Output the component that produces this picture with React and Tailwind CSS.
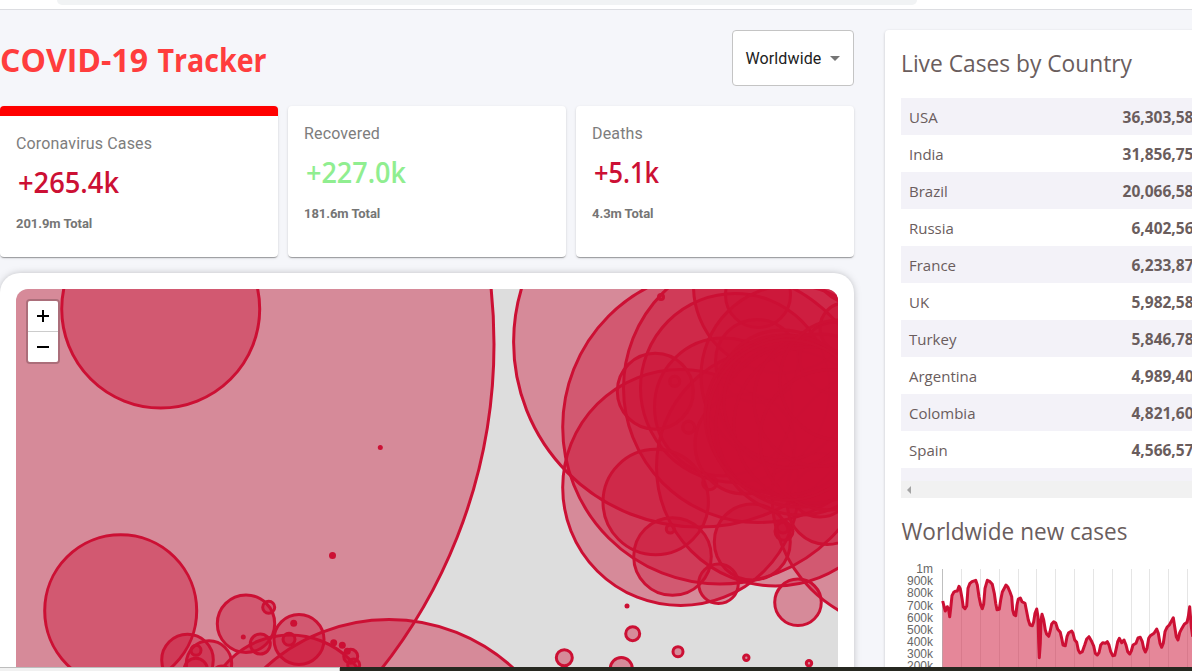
import React from "react";

const stats = [
  { title: "Coronavirus Cases", value: "+265.4k", total: "201.9m Total", color: "text-[#cc1034]", length: 101, active: true },
  { title: "Recovered", value: "+227.0k", total: "181.6m Total", color: "text-[#90ee90]", length: 100 },
  { title: "Deaths", value: "+5.1k", total: "4.3m Total", color: "text-[#cc1034]", length: 65 },
];

const countries = [
  ["USA", "36,303,58"],
  ["India", "31,856,75"],
  ["Brazil", "20,066,58"],
  ["Russia", "6,402,56"],
  ["France", "6,233,87"],
  ["UK", "5,982,58"],
  ["Turkey", "5,846,78"],
  ["Argentina", "4,989,40"],
  ["Colombia", "4,821,60"],
  ["Spain", "4,566,57"],
];

// Case circles on the map: [centre x, centre y, radius]
const circles = [
  [-31, 344, 525], [160.7, 309, 99], [120.7, 610.7, 76],
  [246, 623.7, 28.7], [268.7, 607.3, 6], [299, 639.5, 25], [293.7, 623.3, 2], [243.3, 637, 1],
  [260.3, 644, 10], [289, 639.3, 6], [333.7, 642.7, 2], [342.3, 645.3, 2], [350.7, 656.3, 7],
  [353.7, 665, 6], [347.3, 651.3, 2], [187.5, 660, 25.8], [209, 663.5, 22.7], [196, 650.3, 5],
  [195.8, 670, 11.7], [222, 676, 10], [290, 720.4, 85.4], [389, 802.8, 183.3],
  [380.3, 447.5, 1], [332.5, 555.5, 2],
  [698.6, 342, 185], [719.7, 427, 157], [680.7, 487.5, 118], [758, 388, 134.5], [735, 388, 94.5],
  [723.5, 407, 69], [775.5, 467, 119], [655.3, 391.3, 38], [674.7, 381.3, 5], [688.7, 427.3, 6],
  [661, 297, 2.5], [655.7, 502, 52.7], [672.5, 556.5, 38.8], [752.3, 542, 38], [718.5, 583.7, 19.8],
  [798, 602.3, 23.3], [627, 606, 1], [632.7, 633.7, 7], [564.3, 657.7, 8], [621.3, 668.5, 11],
  [678, 651.7, 5], [746.3, 657.7, 2.7], [809, 663.3, 2.7], [670.3, 529, 4], [709.7, 482.7, 7],
  [784, 531.3, 9], [783, 527, 6], [905, 495, 133], [827, 505, 39.5], [820, 485, 32],
  [745, 444, 50], [758, 295, 32.5], [780.5, 286, 87], [757, 361, 41.5], [792, 376, 91],
  [782, 395, 65], [836, 358, 36], [845, 328, 25], [853, 265, 38.5],
  [800, 430, 85], [798, 425, 82], [785, 415, 80], [812, 425, 78], [790, 402, 66], [820, 400, 66],
  [830, 440, 70], [840, 380, 60], [788, 420, 80],
];

const gridX = [942.5, 961.5, 980.5, 999.5, 1018.5, 1036.5, 1055.5, 1074.5, 1093.5, 1112.5, 1131.5, 1149.5, 1168.5, 1187.5];
const ticks = ["1m", "900k", "800k", "700k", "600k", "500k", "400k", "300k", "200k"];

// Daily values, in thirds of a pixel
const series = [
  [188, 513], [193, 532], [196, 543], [202, 530], [206, 540], [209, 560], [212, 535], [216, 497], [221, 487], [226, 484],
  [232, 483], [237, 469], [241, 476], [246, 505], [250, 531], [255, 536], [260, 528], [264, 475], [269, 461], [276, 455],
  [287, 451], [292, 465], [297, 500], [302, 525], [307, 536], [311, 522], [315, 475], [322, 451], [330, 455], [337, 463],
  [343, 490], [347, 520], [351, 539], [358, 538], [362, 510], [367, 486], [373, 475], [378, 465], [384, 472], [390, 486],
  [395, 500], [398, 540], [402, 554], [407, 557], [411, 525], [415, 507], [421, 504], [426, 515], [435, 520], [440, 545],
  [445, 570], [450, 585], [457, 587], [461, 575], [465, 550], [470, 537], [474, 560], [476, 640], [478, 683], [481, 640],
  [483, 570], [486, 553], [491, 570], [496, 600], [500, 613], [506, 619], [510, 605], [515, 582], [521, 575], [527, 579],
  [533, 598], [541, 607], [545, 625], [549, 645], [556, 647], [561, 620], [566, 608], [575, 603], [579, 610], [584, 630],
  [590, 637], [595, 660], [600, 669], [607, 665], [614, 645], [620, 627], [627, 620], [634, 632], [641, 648], [646, 670],
  [652, 675], [657, 668], [662, 645], [668, 638], [676, 640], [682, 635], [687, 645], [692, 665], [698, 677], [704, 676],
  [709, 655], [713, 635], [718, 625], [725, 638], [732, 630], [738, 645], [743, 665], [749, 672], [754, 663], [759, 645],
  [768, 640], [774, 624], [781, 622], [787, 635], [791, 655], [796, 666], [801, 655], [806, 625], [811, 617], [822, 610],
  [830, 597], [835, 610], [840, 640], [845, 652], [850, 640], [855, 605], [861, 592], [868, 585], [880, 563], [884, 590],
  [889, 620], [894, 630], [899, 608], [905, 596], [913, 583], [921, 577], [925, 560], [929, 530], [934, 590], [938, 620],
].map(([x, y]) => [880 + x / 3, 430 + y / 3]);

const line = "M" + series.map(([x, y]) => x.toFixed(1) + "," + y.toFixed(1)).join("L");

// One line of text fitted to a fixed width
function FitText({ x = 0, y, length, weight = 400, size, children }) {
  return (
    <text x={x} y={y} textLength={length} lengthAdjust="spacingAndGlyphs" fill="currentColor" fontFamily="Open Sans, sans-serif" fontWeight={weight} fontSize={size}>
      {children}
    </text>
  );
}

function StatCard({ item }) {
  return (
    <div className={"h-[151px] w-[278px] shrink-0 overflow-hidden rounded bg-white px-4 shadow-[0_2px_1px_-1px_rgba(0,0,0,0.2),0_1px_1px_0_rgba(0,0,0,0.14),0_1px_3px_0_rgba(0,0,0,0.12)] " + (item.active ? "border-t-10 border-[red]" : "")}>
      <div className="pt-4 font-[Roboto] text-base leading-[23px] tracking-[0.15px] text-[#7d7d7d]">{item.title}</div>
      <svg className={"mt-[10px] block h-9 w-[110px] overflow-visible " + item.color}>
        <FitText x={2} y={28} length={item.length} weight={600} size={28}>{item.value}</FitText>
      </svg>
      <div className="mt-[13px] font-[Roboto] text-[13px] leading-5 font-bold tracking-[-0.05px] text-[#757575]">{item.total}</div>
    </div>
  );
}

function CaseMap() {
  return (
    <div className="mt-4 h-[420px] w-[854px] rounded-[20px] bg-white p-4 shadow-[0_0_8px_-2px_rgba(0,0,0,0.35)]">
      <div className="relative h-[404px] overflow-hidden rounded-xl bg-[#ddd]">
        <svg className="block h-[404px] w-[822px]" viewBox="16 289 822 404">
          {circles.map(([x, y, r], i) =>
            r <= 2 ? (
              <circle key={i} cx={x} cy={y} r={r + 1.5} fill="#cc1034" />
            ) : (
              <circle key={i} cx={x} cy={y} r={r} fill="#cc1034" fillOpacity="0.4" stroke="#cc1034" strokeWidth="3" />
            )
          )}
        </svg>
        <div className="absolute top-[10px] left-[10px] w-[34px] overflow-hidden rounded border-2 border-black/20 bg-clip-padding">
          <button className="flex h-[31px] w-[30px] items-center justify-center border-b border-[#ccc] bg-white">
            <svg width="12" height="12"><path d="M0 6H12M6 0V12" stroke="black" strokeWidth="2" /></svg>
          </button>
          <button className="flex h-[30px] w-[30px] items-center justify-center bg-white">
            <svg width="12" height="12"><path d="M0 6H12" stroke="black" strokeWidth="2" /></svg>
          </button>
        </div>
      </div>
    </div>
  );
}

function CasesChart() {
  return (
    <svg className="mt-[11px] block h-[115px] w-[291px]" viewBox="901 556 291 115">
      {gridX.map((x, i) => (
        <path key={x} d={"M" + x + " 569V671"} stroke={i ? "#e5e5e5" : "#bfbfbf"} strokeWidth="1" />
      ))}
      {ticks.map((t, i) => (
        <text key={t} x="933" y={573.2 + i * 12.1} textAnchor="end" fontSize="12" fill="#666" fontFamily="Liberation Sans, sans-serif">{t}</text>
      ))}
      <path d={line + "V671H942.6Z"} fill="#cc1034" fillOpacity="0.5" />
      <path d={line} fill="none" stroke="#cc1034" strokeWidth="3" strokeLinejoin="round" />
    </svg>
  );
}

export default function App() {
  return (
    <div className="relative h-[671px] w-[1192px] overflow-hidden bg-[#f5f6fa] font-['Open_Sans',sans-serif]">
      <div className="h-[10px] border-b border-[#dcdde1] bg-white pl-[57px]">
        <div className="h-[5px] w-[860px] rounded-b-[14px] bg-[#f1f3f4]" />
      </div>
      <div className="flex">
        <main className="w-[854px] shrink-0 pt-5">
          <div className="flex h-14 items-center justify-between">
            <svg className="block h-14 w-[280px] overflow-visible text-[#ff3d3d]">
              <FitText x={0} y={42} length={148} weight={700} size={32}>COVID-19</FitText>
              <FitText x={157.5} y={42} length={109} weight={700} size={32}>Tracker</FitText>
            </svg>
            <div className="flex h-14 w-[122px] items-center justify-between rounded border border-[#c4c4c4] bg-white pr-[13px] pl-[12.5px] font-[Roboto] text-base tracking-[0.12px] text-[#212121]">
              <span className="pt-[2px]">Worldwide</span>
              <svg width="10" height="5"><path d="M0 0H10L5 5Z" fill="#757575" /></svg>
            </div>
          </div>
          <div className="mt-5 flex gap-[10px]">
            {stats.map((s) => <StatCard key={s.title} item={s} />)}
          </div>
          <CaseMap />
        </main>
        <aside className="mt-5 ml-[31px] h-[661px] w-[320px] shrink-0 rounded bg-white pt-4 pl-4 text-[#6a5d5d] shadow-[0_1px_3px_0_rgba(0,0,0,0.2)]">
          <svg className="block h-[36px] w-[290px] overflow-visible">
            <FitText x={0} y={26} length={231} size={24}>Live Cases by Country</FitText>
          </svg>
          <div className="mt-4 h-[383px] w-[291px] overflow-hidden">
            {countries.map(([name, n]) => (
              <div key={name} className="flex h-[37px] items-center justify-between pt-[2px] pl-2 text-[15px] odd:bg-[#f3f2f8]">
                <span>{name}</span>
                <span className="-mr-[1.5px] text-[15.5px] font-bold">{n}</span>
              </div>
            ))}
            <div className="h-[13px] bg-[#f3f2f8]" />
          </div>
          <div className="flex h-[17px] items-center bg-[#f1f1f1] pl-[6px]">
            <svg width="4" height="8"><path d="M4 0V8L0 4Z" fill="#a3a3a3" /></svg>
          </div>
          <svg className="mt-4 block h-[31px] w-[290px] overflow-visible">
            <FitText x={0.5} y={26} length={226} size={24}>Worldwide new cases</FitText>
          </svg>
          <CasesChart />
        </aside>
      </div>
      <div className="absolute bottom-0 left-0 flex h-1 w-full bg-[#262820]">
        <div className="w-[340px] border-t border-r border-[#bdbdbd] bg-[#f1f1f1]" />
      </div>
    </div>
  );
}
